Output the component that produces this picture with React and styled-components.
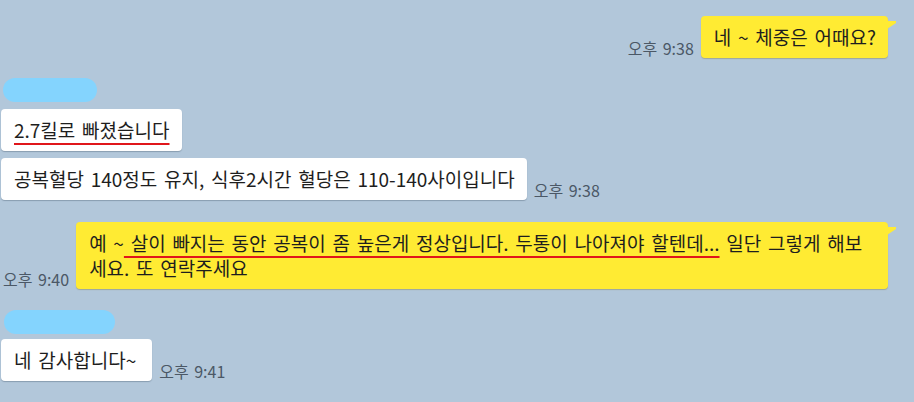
import React from "react";
import styled, { createGlobalStyle, css } from "styled-components";

const Global = createGlobalStyle`
  html, body { margin: 0; padding: 0; }
  body {
    background: #b2c7da;
    font-family: "Noto Sans CJK KR", "Noto Sans", sans-serif;
  }
`;

const Chat = styled.div`
  width: 914px;
  height: 402px;
  box-sizing: border-box;
  padding: 16px 0 0 0;
  display: flex;
  flex-direction: column;
  overflow: hidden;
`;

const Row = styled.div`
  display: flex;
  align-items: flex-end;
  gap: 7px;
  margin-top: ${(p) => p.$mt || 0}px;
  justify-content: ${(p) => (p.$mine ? "flex-end" : "flex-start")};
  padding: ${(p) => (p.$mine ? "0 26px 0 3px" : "0 0 0 1px")};
`;

const Bubble = styled.div`
  position: relative;
  box-sizing: border-box;
  padding: 8px ${(p) => p.$pr || 12}px 9px 13px;
  font-size: 19px;
  line-height: 25px;
  word-spacing: 2.5px;
  color: #1e1e1e;
  border-radius: 4px;
  flex: 0 1 auto;
  ${(p) =>
    p.$mine
      ? css`
          background: #ffeb33;
          box-shadow: 0 1px 1px rgba(120, 110, 40, 0.35);
          &::after {
            content: "";
            position: absolute;
            top: 5px;
            right: -8px;
            width: 0;
            height: 0;
            border-top: 2px solid #ffeb33;
            border-left: 9px solid #ffeb33;
            border-bottom: 6px solid transparent;
          }
        `
      : css`
          background: #ffffff;
          box-shadow: 0 1px 1px rgba(60, 80, 100, 0.35);
        `}
`;

const Time = styled.span`
  font-size: 16px;
  line-height: 20px;
  word-spacing: 2px;
  color: #4b5866;
  white-space: nowrap;
  margin-bottom: 0;
  flex: 0 0 auto;
`;

const NameBar = styled.div`
  width: ${(p) => p.$w}px;
  height: 24px;
  margin: ${(p) => p.$mt}px 0 0 ${(p) => p.$ml}px;
  border-radius: 12px;
  background: #84d4fe;
  filter: blur(0.6px);
`;

const Mark = styled.span`
  text-decoration: underline;
  text-decoration-color: #e0161b;
  text-decoration-thickness: 2px;
  text-underline-offset: 5px;
  text-decoration-skip-ink: none;
`;

export default function App() {
  return (
    <>
      <Global />
      <Chat>
        <Row $mine>
          <Time>오후 9:38</Time>
          <Bubble $mine>네 ~ 체중은 어때요?</Bubble>
        </Row>

        <NameBar $w={94} $mt={20} $ml={3} />
        <Row $mt={7}>
          <Bubble>
            <Mark>2.7킬로 빠졌습니다</Mark>
          </Bubble>
        </Row>
        <Row $mt={7}>
          <Bubble>공복혈당 140정도 유지, 식후2시간 혈당은 110-140사이입니다</Bubble>
          <Time>오후 9:38</Time>
        </Row>

        <Row $mine $mt={22}>
          <Time>오후 9:40</Time>
          <Bubble $mine>
            예 ~<Mark> 살이 빠지는 동안 공복이 좀 높은게 정상입니다. 두통이 나아져야 할텐데...</Mark> 일단 그렇게 해보세요. 또 연락주세요
          </Bubble>
        </Row>

        <NameBar $w={111} $mt={21} $ml={4} />
        <Row $mt={5}>
          <Bubble $pr={16}>네 감사합니다~</Bubble>
          <Time>오후 9:41</Time>
        </Row>
      </Chat>
    </>
  );
}
